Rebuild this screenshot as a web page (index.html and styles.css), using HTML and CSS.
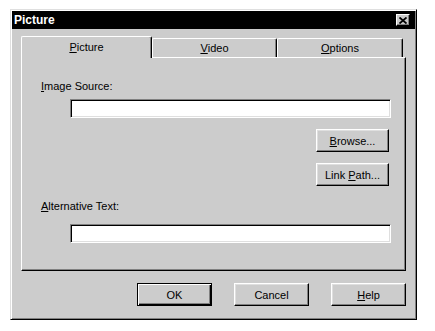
FILE: index.html
```html
<!DOCTYPE html>
<html>
  <head>
    <title>Picture</title>
    <link rel="stylesheet" href="styles.css">
  </head>

  <body>
    <div class="window">
      <div class="titlebar">
        <span class="title">Picture</span>
        <button class="close-button" type="button" title="Close">
          <svg width="8" height="7" viewBox="0 0 8 7">
            <path d="M0.5 0.5 L7.5 6.5 M7.5 0.5 L0.5 6.5" stroke="#000" stroke-width="1.8" fill="none"/>
          </svg>
        </button>
      </div>

      <div class="dialog-body">
        <div class="tabs">
          <div class="tab tab-active"><u>P</u>icture</div>
          <div class="tab tab-video"><u>V</u>ideo</div>
          <div class="tab tab-options"><u>O</u>ptions</div>
        </div>

        <div class="panel">
          <label class="field-label"><u>I</u>mage Source:</label>
          <div class="text-input"></div>

          <div class="side-buttons">
            <button class="btn" type="button"><u>B</u>rowse...</button>
            <button class="btn" type="button">Link <u>P</u>ath...</button>
          </div>

          <label class="field-label alt-label"><u>A</u>lternative Text:</label>
          <div class="text-input"></div>
        </div>

        <div class="footer">
          <button class="btn btn-default" type="button">OK</button>
          <button class="btn" type="button">Cancel</button>
          <button class="btn" type="button"><u>H</u>elp</button>
        </div>
      </div>
    </div>
  </body>
</html>
```

FILE: styles.css
```css
* {
  box-sizing: border-box;
}

body {
  margin: 0;
  background: #ffffff;
  font-family: 'Liberation Sans', Arial, sans-serif;
  font-size: 11px;
  color: #000;
}

u {
  text-decoration: underline;
}

.window {
  margin: 9px 0 0 10px;
  width: 407px;
  height: 311px;
  padding: 1px;
  background: #cccccc;
  border: 1px solid;
  border-color: #dfdfdf #000 #000 #dfdfdf;
  box-shadow: inset 1px 1px #fff, inset -1px -1px #808080;
}

.titlebar {
  height: 18px;
  background: #000;
  color: #fff;
  display: flex;
  align-items: center;
  justify-content: space-between;
  padding: 0 5px 0 2px;
}

.title {
  font-weight: bold;
  font-size: 12px;
}

.close-button {
  width: 14px;
  height: 12px;
  padding: 0;
  display: flex;
  align-items: center;
  justify-content: center;
  background: #cccccc;
  border: 1px solid;
  border-color: #fff #000 #000 #fff;
  box-shadow: inset -1px -1px #808080;
}

.dialog-body {
  padding: 7px 9px 0 9px;
}

/* tab strip */
.tabs {
  display: flex;
  align-items: flex-end;
}

.tab {
  height: 19px;
  display: flex;
  align-items: center;
  justify-content: center;
  background: #cccccc;
  border: 1px solid;
  border-bottom: none;
  border-color: #fff #000 #000 #fff;
  border-radius: 2px 2px 0 0;
  box-shadow: inset -1px 0 #808080;
}

.tab-active {
  width: 131px;
  height: 22px;
  margin-bottom: -1px;
  position: relative;
  z-index: 1;
  padding-bottom: 1px;
}

.tab-video {
  width: 125px;
}

.tab-options {
  width: 126px;
}

.panel {
  height: 214px;
  padding: 22px 14px 0 19px;
  display: flex;
  flex-direction: column;
  background: #cccccc;
  border: 1px solid;
  border-color: #fff #000 #000 #fff;
  box-shadow: inset -1px -1px #808080;
}

.field-label {
  display: block;
  line-height: 13px;
}

.alt-label {
  margin-top: 14px;
}

.text-input {
  margin: 6px 0 0 29px;
  height: 19px;
  background: #fff;
  border: 1px solid;
  border-color: #808080 #fff #fff #808080;
  box-shadow: inset 1px 1px #000, inset -1px -1px #dfdfdf;
}

.alt-label + .text-input {
  margin-top: 11px;
}

.side-buttons {
  display: flex;
  flex-direction: column;
  align-items: flex-end;
  gap: 11px;
  margin: 11px 2px 0 0;
}

.btn {
  width: 73px;
  height: 23px;
  padding: 0;
  font-family: 'Liberation Sans', Arial, sans-serif;
  font-size: 11px;
  color: #000;
  background: #cccccc;
  border: 1px solid;
  border-color: #fff #000 #000 #fff;
  box-shadow: inset -1px -1px #808080, inset 1px 1px #dfdfdf;
}

.footer {
  display: flex;
  justify-content: flex-end;
  gap: 22px;
  margin-top: 12px;
}

.footer .btn {
  width: 75px;
}

.btn-default {
  border-color: #000;
  box-shadow: inset 1px 1px #fff, inset -1px -1px #000, inset -2px -2px #808080;
}
```
